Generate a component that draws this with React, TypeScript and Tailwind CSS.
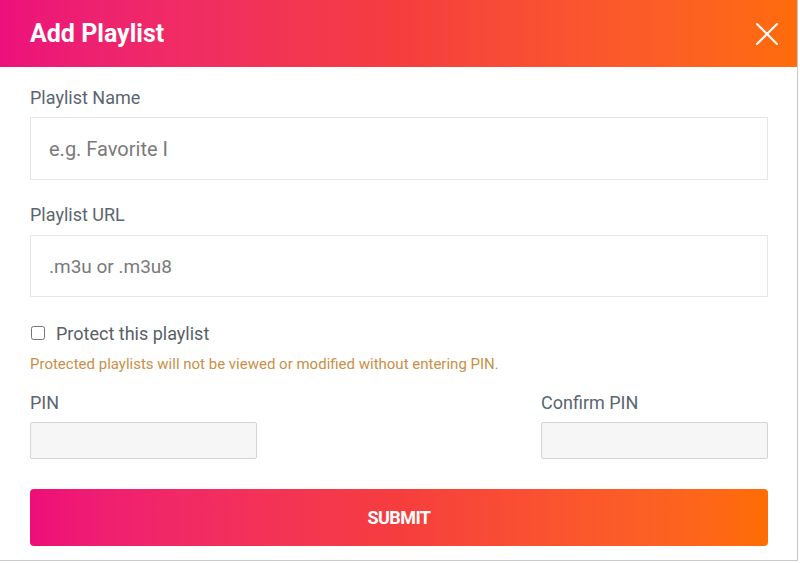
import { X } from "lucide-react";

// Add Playlist modal
export default function App() {
  return (
    <div className="w-[800px] h-[563px] bg-white font-['Roboto','Liberation_Sans',sans-serif]">
      <div className="w-[798px] h-[561px] bg-white border-r border-b border-[#c8c8c8] flex flex-col">
        {/* header */}
        <div className="h-[67px] shrink-0 flex items-center justify-between pl-[30px] pr-[10px] bg-gradient-to-r from-[#ec0f7c] via-[#f53d3d] to-[#ff6c08]">
          <h1 className="text-[25px] font-bold text-white leading-none">Add Playlist</h1>
          <X className="w-[40px] h-[40px] text-white" strokeWidth={1.2} />
        </div>

        {/* body */}
        <form className="flex flex-col pl-[30px] pr-[29px] pt-[19px]" onSubmit={(e) => e.preventDefault()}>
          <label className="text-[18px] leading-6 text-[#5b6570] mb-[7px]">Playlist Name</label>
          <input
            className="h-[63px] border border-[#e6e6e6] px-[18px] text-[20px] text-[#555] placeholder:text-[#7a7a7a] outline-none"
            placeholder="e.g. Favorite I"
          />

          <label className="text-[18px] leading-6 text-[#5b6570] mt-[23px] mb-[8px]">Playlist URL</label>
          <input
            className="h-[62px] border border-[#e6e6e6] px-[18px] text-[19px] text-[#555] placeholder:text-[#7a7a7a] outline-none"
            placeholder=".m3u or .m3u8"
          />

          <label className="flex items-center gap-[11px] mt-[24px] h-6">
            <input type="checkbox" className="w-[14px] h-[14px] ml-[1px]" />
            <span className="text-[18px] text-[#585f66]">Protect this playlist</span>
          </label>
          <p className="text-[15px] leading-5 text-[#c98f48] mt-[9px]">
            Protected playlists will not be viewed or modified without entering PIN.
          </p>

          <div className="flex justify-between mt-[17px]">
            <div className="flex flex-col w-[227px]">
              <label className="text-[18px] leading-6 text-[#5b6570] mb-[7px]">PIN</label>
              <input type="password" className="h-[37px] bg-[#f6f6f6] border border-[#d4d4d4] rounded-[2px] outline-none" />
            </div>
            <div className="flex flex-col w-[227px]">
              <label className="text-[18px] leading-6 text-[#5b6570] mb-[7px]">Confirm PIN</label>
              <input type="password" className="h-[37px] bg-[#f6f6f6] border border-[#d4d4d4] rounded-[2px] outline-none" />
            </div>
          </div>

          <button
            type="submit"
            className="mt-[30px] h-[57px] rounded-[4px] bg-gradient-to-r from-[#ee0d7a] via-[#f63d3d] to-[#ff6d02] text-white text-[18px] font-bold tracking-[-0.6px]"
          >
            SUBMIT
          </button>
        </form>
      </div>
    </div>
  );
}
